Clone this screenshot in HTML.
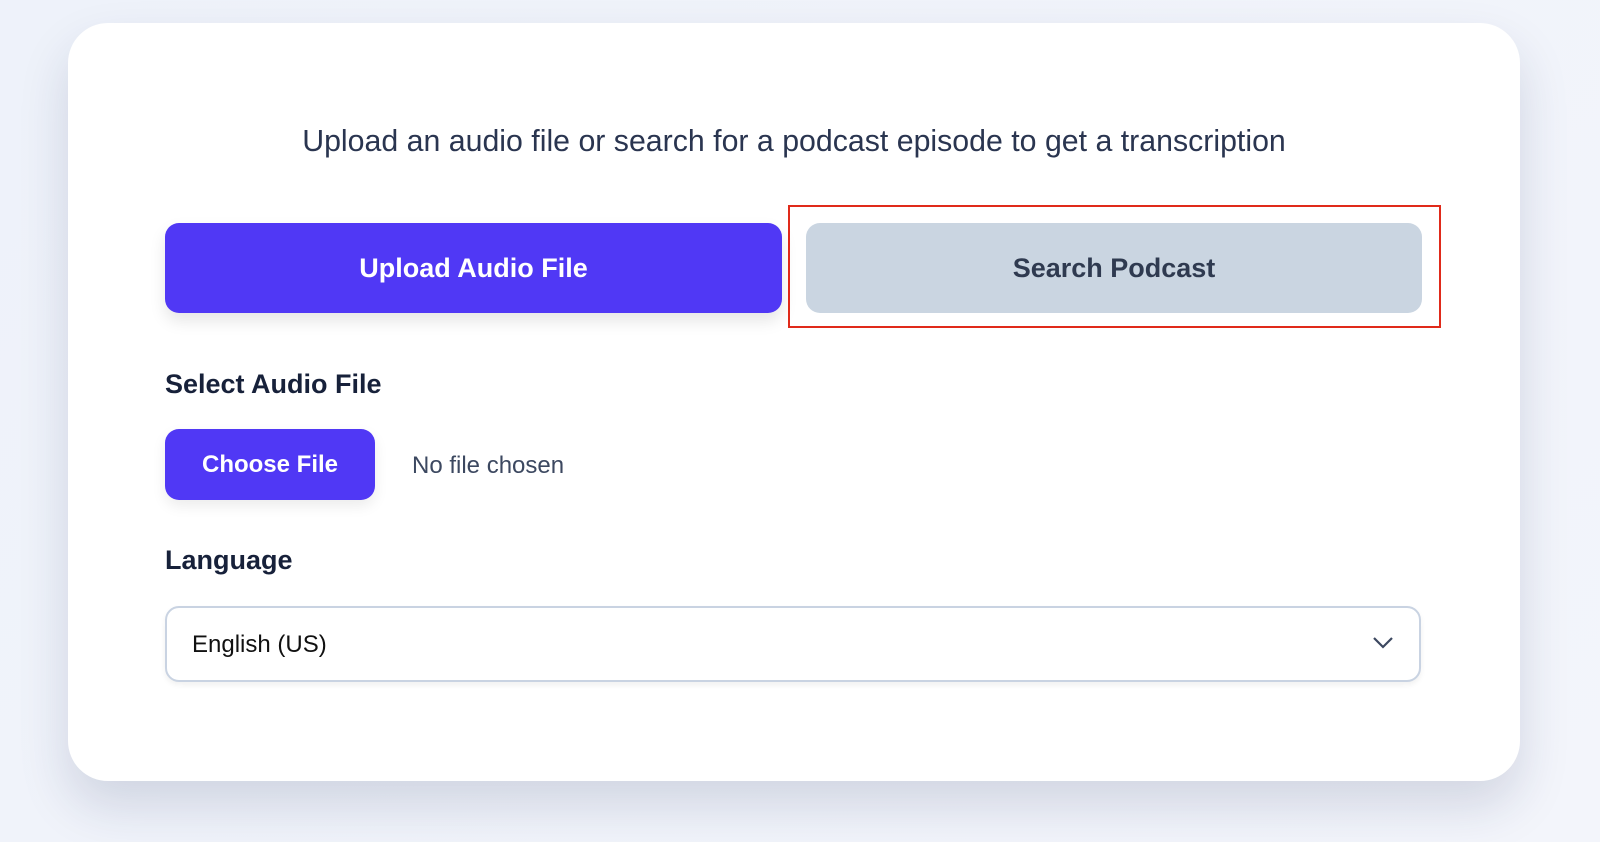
<!DOCTYPE html>
<html><head><style>
body{margin:0;width:1600px;height:842px;background:linear-gradient(135deg,#eef2fa,#f3f5fb);font-family:"Liberation Sans",sans-serif;position:relative;overflow:hidden}
.card{position:absolute;left:68px;top:23px;width:1452px;height:758px;background:#fff;border-radius:40px;box-shadow:0 25px 50px rgba(30,40,90,.15)}
.abs{position:absolute}
.h{left:0;width:1588px;text-align:center;top:125px;font-size:30.3px;color:#2a3550}
.btn{border-radius:14px;font-weight:bold;font-size:27px;display:flex;align-items:center;justify-content:center}
</style></head><body>
<div class="card"></div>
<div class="abs h">Upload an audio file or search for a podcast episode to get a transcription</div>
<div class="abs btn" style="left:165px;top:223px;width:617px;height:90px;background:#5038f5;color:#fff;box-shadow:0 8px 16px rgba(0,0,0,.1)">Upload Audio File</div>
<div class="abs btn" style="left:806px;top:223px;width:616px;height:90px;background:#cad5e1;color:#2f3a50">Search Podcast</div>
<div class="abs" style="left:788px;top:205px;width:649px;height:119px;border:2.5px solid #e02a1a"></div>
<div class="abs" style="left:165px;top:369px;font-size:27px;font-weight:bold;color:#17213a">Select Audio File</div>
<div class="abs btn" style="left:165px;top:429px;width:210px;height:71px;background:#5038f5;color:#fff;font-size:24px;box-shadow:0 6px 14px rgba(0,0,0,.08)">Choose File</div>
<div class="abs" style="left:412px;top:452px;font-size:24px;color:#3c4860">No file chosen</div>
<div class="abs" style="left:165px;top:545px;font-size:27px;font-weight:bold;color:#17213a">Language</div>
<div class="abs" style="left:165px;top:606px;width:1252px;height:72px;border:2px solid #c9d3e2;border-radius:14px;background:#fff;box-shadow:0 3px 6px rgba(0,0,0,.06)"></div>
<div class="abs" style="left:192px;top:631px;font-size:24px;color:#111">English (US)</div>
<svg class="abs" style="left:1372px;top:636px" width="22" height="14" viewBox="0 0 22 14"><path d="M2 2l9 9 9-9" fill="none" stroke="#3c4860" stroke-width="2.2"/></svg>
</body></html>
